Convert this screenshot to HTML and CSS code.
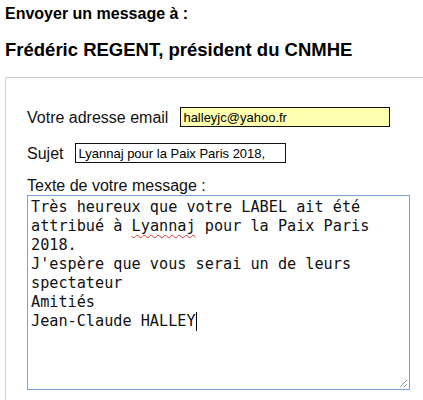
FILE: index.html
```html
<!DOCTYPE html>
<html lang="fr">
<head>
<meta charset="utf-8">
<title>Envoyer un message</title>
<link rel="stylesheet" href="styles.css">
</head>
<body>
<h1 class="title">Envoyer un message à :</h1>
<h2 class="recipient">Frédéric REGENT, président du CNMHE</h2>
<form class="panel">
  <div class="row">
    <label class="lbl" for="email">Votre adresse email</label>
    <input id="email" class="field field-email" type="text" value="halleyjc@yahoo.fr">
  </div>
  <div class="row row-subject">
    <label class="lbl" for="subject">Sujet</label>
    <input id="subject" class="field field-subject" type="text" value="Lyannaj pour la Paix Paris 2018,">
  </div>
  <label class="lbl lbl-block">Texte de votre message :</label>
  <div class="message" role="textbox" aria-multiline="true"><div class="msg-line">Très heureux que votre LABEL ait été</div><div class="msg-line">attribué à <span class="misspelled">Lyannaj</span> pour la Paix Paris</div><div class="msg-line">2018.</div><div class="msg-line">J'espère que vous serai un de leurs</div><div class="msg-line">spectateur</div><div class="msg-line">Amitiés</div><div class="msg-line">Jean-Claude HALLEY<span class="caret"></span></div><svg class="grip" width="10" height="10" viewBox="0 0 10 10"><path d="M9 2 L2 9 M9 6 L6 9" stroke="#9a9a9a" stroke-width="1" fill="none"/></svg></div>
</form>
</body>
</html>
```
FILE: styles.css
```css
html, body {
  margin: 0;
  overflow: hidden;
}
body {
  padding: 5px 0 0 5px;
  background: #fff;
  color: #000;
  font-family: "Liberation Sans", Arial, sans-serif;
}
.title {
  margin: 0;
  font-size: 16px;
  line-height: 18px;
  font-weight: bold;
}
.recipient {
  margin: 16px 0 0;
  font-size: 18.5px;
  line-height: 22px;
  font-weight: bold;
}
.panel {
  margin: 16px 0 0;
  border-top: 1px solid #cfcfcf;
  border-left: 1px solid #cfcfcf;
  padding: 29px 0 20px 21px;
}
.row {
  display: flex;
  align-items: center;
  gap: 12px;
  height: 20px;
}
.row-subject {
  margin-top: 16px;
}
.lbl {
  font-size: 16px;
  line-height: 19px;
  color: #111;
}
.lbl-block {
  display: block;
  margin-top: 13px;
}
.field {
  box-sizing: border-box;
  height: 20px;
  margin: 0;
  padding: 0 2px;
  border: 1px solid #111;
  border-radius: 0;
  font-family: "Liberation Sans", Arial, sans-serif;
  font-size: 13px;
  color: #000;
  outline: none;
}
.field-email {
  width: 210px;
  background: #ffffb0;
}
.field-subject {
  width: 211px;
  background: #fff;
}
.message {
  position: relative;
  box-sizing: border-box;
  width: 383px;
  height: 195px;
  border: 1px solid #79a2dd;
  padding: 2px 3px;
  font-family: "DejaVu Sans Mono", monospace;
  font-size: 15.2px;
  line-height: 19px;
  color: #111;
  white-space: pre;
}
.misspelled {
  text-decoration: underline wavy #e0302a;
  text-decoration-thickness: 1px;
  text-underline-offset: 3px;
}
.caret {
  display: inline-block;
  width: 1px;
  height: 19px;
  background: #000;
  vertical-align: -5px;
}
.grip {
  position: absolute;
  right: 1px;
  bottom: 1px;
}
```
